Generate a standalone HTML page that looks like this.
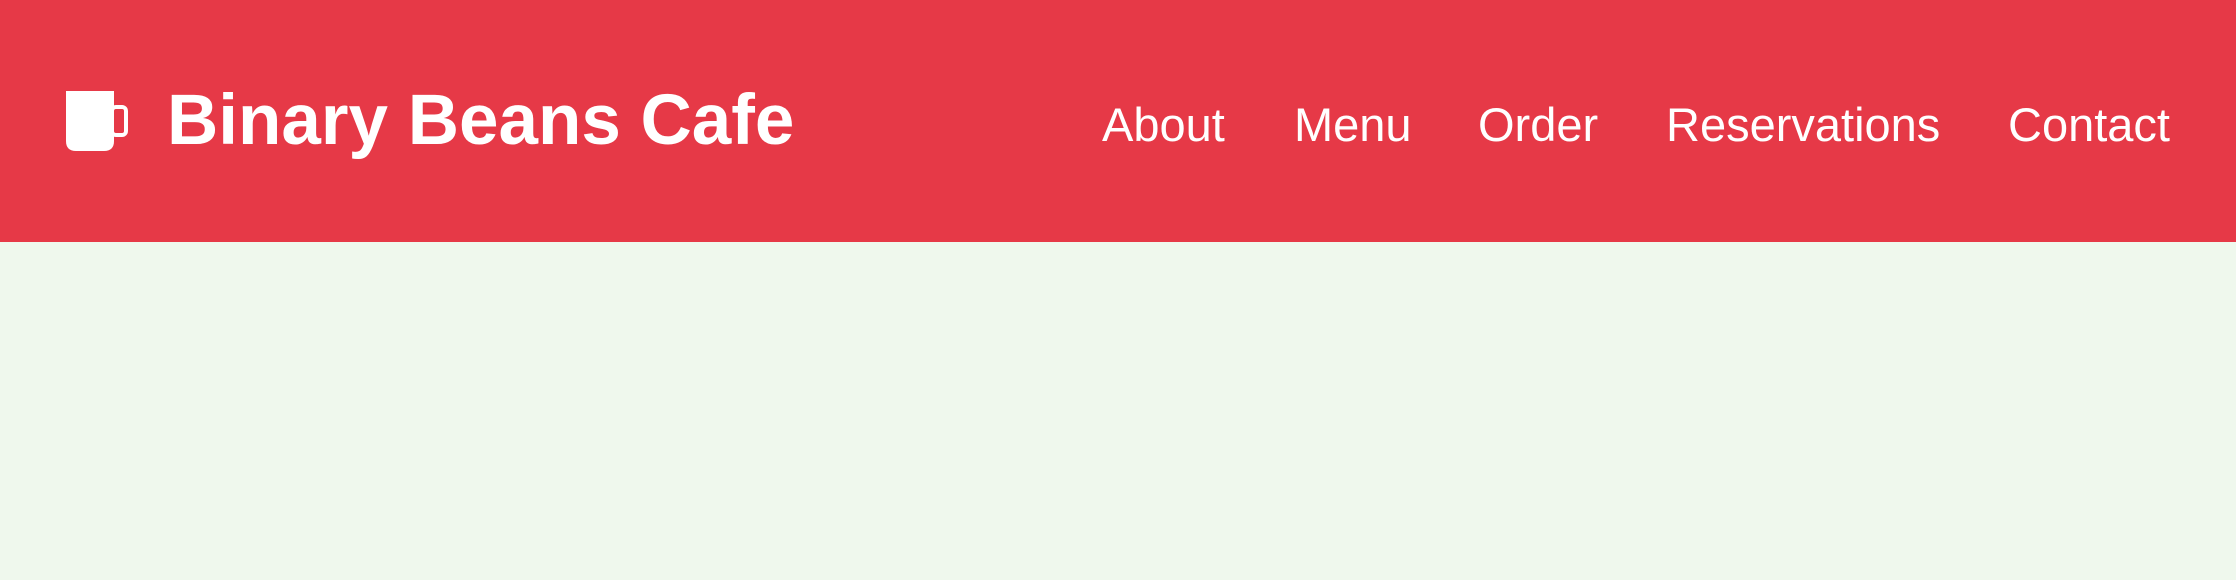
<!DOCTYPE html>
<html><head><style>
body{margin:0;width:2236px;height:580px;background:#eff8ed;font-family:"Liberation Sans",Arial,sans-serif;overflow:hidden}
header{position:absolute;left:0;top:0;width:2236px;height:242px;background:#e63947;color:#fff}
.t{position:absolute;left:167px;top:80px;font-size:71px;font-weight:bold;line-height:82px;white-space:nowrap}
.n{position:absolute;top:97px;font-size:47px;line-height:55px;white-space:nowrap}
</style></head><body>
<header>
<svg style="position:absolute;left:66px;top:91px" width="64" height="62" viewBox="0 0 64 62">
<path d="M0 0H48V50Q48 60 38 60H10Q0 60 0 50Z" fill="#fff"/>
<rect x="46" y="16" width="14" height="28" rx="4" fill="none" stroke="#fff" stroke-width="4"/>
</svg>
<div class="t">Binary Beans Cafe</div>
<div class="n" style="left:1102px">About</div>
<div class="n" style="left:1294px">Menu</div>
<div class="n" style="left:1478px">Order</div>
<div class="n" style="left:1666px">Reservations</div>
<div class="n" style="left:2008px">Contact</div>
</header>
</body></html>
